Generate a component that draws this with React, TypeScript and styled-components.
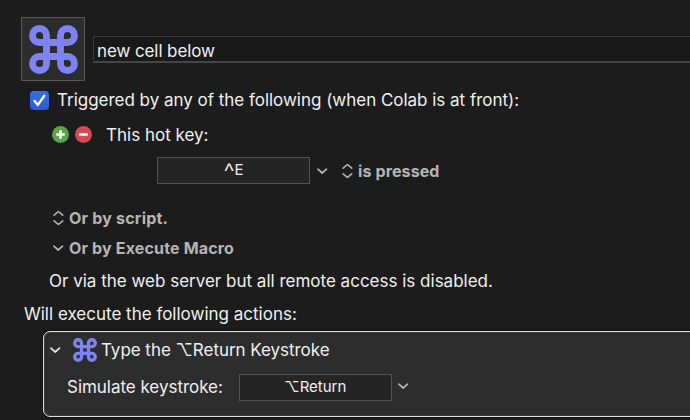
import React from 'react';
import styled, { createGlobalStyle } from 'styled-components';

const GlobalStyle = createGlobalStyle`
  html, body, #root { height: 100%; }
  body {
    margin: 0;
    overflow: hidden;
    background: #1c1c1c;
    font-family: Inter, "DejaVu Sans", sans-serif;
  }
  * { box-sizing: border-box; }
`;

const Editor = styled.main`
  display: flex;
  flex-direction: column;
  width: 690px;
  height: 420px;
  overflow: hidden;
  background: #1c1c1c;
`;

const Header = styled.header`
  display: flex;
  align-items: flex-start;
  gap: 8px;
  padding: 17px 0 0 21px;
  height: 81px;
`;

const MacroIcon = styled.div`
  display: grid;
  place-items: center;
  flex: none;
  width: 64px;
  height: 64px;
  border: 1px solid #585858;
  background: #2c2c2c;
`;

const NameField = styled.div`
  display: flex;
  align-items: center;
  flex: 1;
  height: 27px;
  margin-top: 19px;
  padding: 4px 0 0 3px;
  border: 1px solid #393939;
  border-right: 0;
  border-bottom: 2px solid #454545;
  background: #191919;
`;

const Row = styled.div<{ $height: number; $indent: number }>`
  display: flex;
  align-items: center;
  flex: none;
  height: ${p => p.$height}px;
  padding-left: ${p => p.$indent}px;
`;

const Label = styled.span<{ $size?: number; $spacing?: number; $strong?: boolean; $gap?: number }>`
  flex: none;
  margin-left: ${p => p.$gap ?? 0}px;
  color: ${p => (p.$strong ? '#b5b5b5' : '#f0f0f0')};
  font-size: ${p => p.$size ?? 17}px;
  font-weight: ${p => (p.$strong ? 700 : 400)};
  line-height: 22px;
  letter-spacing: ${p => p.$spacing ?? 0}px;
  white-space: pre;
`;

const Caret = styled.span`
  font-size: 25px;
  font-weight: 300;
  line-height: 0;
  vertical-align: -6px;
`;

const Checkbox = styled.span`
  display: grid;
  place-items: center;
  width: 19px;
  height: 19px;
  border-radius: 4px;
  background: linear-gradient(#3a6ee6, #2b5bd2);
`;

const RoundButton = styled.span<{ $color: string; $gap?: number }>`
  display: grid;
  place-items: center;
  width: 17px;
  height: 17px;
  margin-left: ${p => p.$gap ?? 0}px;
  border-radius: 50%;
  background: ${p => p.$color};
`;

const KeyField = styled.div<{ $gap?: number; $lift?: number }>`
  display: flex;
  align-items: center;
  justify-content: center;
  width: 153px;
  height: 27px;
  margin-left: ${p => p.$gap ?? 0}px;
  margin-bottom: ${p => p.$lift ?? 0}px;
  border: 1px solid #545454;
  background: #252525;
`;

const Glyph = styled.svg<{ $gap?: number; $lift?: number }>`
  display: block;
  flex: none;
  margin-left: ${p => p.$gap ?? 0}px;
  margin-bottom: ${p => p.$lift ?? 0}px;
  fill: none;
  stroke-linecap: round;
  stroke-linejoin: round;
`;

const ActionPanel = styled.section`
  flex: none;
  height: 86px;
  margin: 12px -8px 0 43px;
  padding-top: 2px;
  border: 1px solid #e4e4e4;
  border-radius: 7px;
  background: #2d2d2d;
  box-shadow: 0 0 0 1px #101010, inset 0 0 0 1px #3a3a3a;
`;

function CommandGlyph({ size, gap }: { size: number; gap?: number }) {
  return (
    <Glyph $gap={gap} width={size} height={size} viewBox="1.5 1.5 21 21" stroke="#7f82f2" strokeWidth="2.95">
      <path d="M15 6v12a3 3 0 1 0 3-3H6a3 3 0 1 0 3 3V6a3 3 0 1 0-3 3h12a3 3 0 1 0-3-3" />
    </Glyph>
  );
}

function Chevron({ gap, lift, color = '#b5b5b5' }: { gap?: number; lift?: number; color?: string }) {
  return (
    <Glyph $gap={gap} $lift={lift} width="12" height="8" viewBox="0 0 12 8" stroke={color} strokeWidth="1.7">
      <path d="M1.9 2.2 6.2 6 10.5 2.2" />
    </Glyph>
  );
}

function UpDown({ gap }: { gap?: number }) {
  return (
    <Glyph $gap={gap} width="12" height="16" viewBox="0 0 12 16" stroke="#b5b5b5" strokeWidth="1.6">
      <path d="M2.1 5.2 6.4 1.5l4.3 3.7M2.1 10.8 6.4 14.5l4.3-3.7" />
    </Glyph>
  );
}

export default function App() {
  return (
    <>
      <GlobalStyle />
      <Editor>
        <Header>
          <MacroIcon><CommandGlyph size={49} /></MacroIcon>
          <NameField><Label $spacing={-0.1}>new cell below</Label></NameField>
        </Header>
        <Row $height={38} $indent={30}>
          <Checkbox>
            <Glyph width="13" height="13" viewBox="0 0 13 13" stroke="#fff" strokeWidth="2.3">
              <path d="M1.6 7 4.8 11 11.2 1.8" />
            </Glyph>
          </Checkbox>
          <Label $gap={8} $spacing={-0.02}>Triggered by any of the following (when Colab is at front):</Label>
        </Row>
        <Row $height={31} $indent={52}>
          <RoundButton $color="#5aa548">
            <Glyph width="9" height="9" viewBox="0 0 9 9" stroke="#fff" strokeWidth="2.6">
              <path d="M4.5 1.3v6.4M1.3 4.5h6.4" />
            </Glyph>
          </RoundButton>
          <RoundButton $color="#d14b52" $gap={6}>
            <Glyph width="9" height="9" viewBox="0 0 9 9" stroke="#fff" strokeWidth="2.6">
              <path d="M1.3 4.5h6.4" />
            </Glyph>
          </RoundButton>
          <Label $gap={14}>This hot key:</Label>
        </Row>
        <Row $height={42} $indent={157}>
          <KeyField $lift={2}><Label $size={15}><Caret>^</Caret>E</Label></KeyField>
          <Chevron gap={6} />
          <UpDown gap={13} />
          <Label $strong $size={16} $gap={5} $spacing={0.12}>is pressed</Label>
        </Row>
        <Row $height={51} $indent={52}>
          <UpDown />
          <Label $strong $size={16} $gap={5} $spacing={0.2}>Or by script.</Label>
        </Row>
        <Row $height={9} $indent={52}>
          <Chevron />
          <Label $strong $size={16} $gap={5} $spacing={0.16}>Or by Execute Macro</Label>
        </Row>
        <Row $height={57} $indent={49}>
          <Label>Or via the web server but all remote access is disabled.</Label>
        </Row>
        <Row $height={10} $indent={24}>
          <Label>Will execute the following actions:</Label>
        </Row>
        <ActionPanel>
          <Row $height={32} $indent={5}>
            <Chevron color="#e4e4e4" />
            <CommandGlyph size={24} gap={12} />
            <Label $gap={4} $spacing={-0.04}>Type the ⌥Return Keystroke</Label>
          </Row>
          <Row $height={42} $indent={23}>
            <Label $spacing={-0.03}>Simulate keystroke:</Label>
            <KeyField $gap={16}><Label $size={15}>⌥Return</Label></KeyField>
            <Chevron gap={5} lift={3} />
          </Row>
        </ActionPanel>
      </Editor>
    </>
  );
}
